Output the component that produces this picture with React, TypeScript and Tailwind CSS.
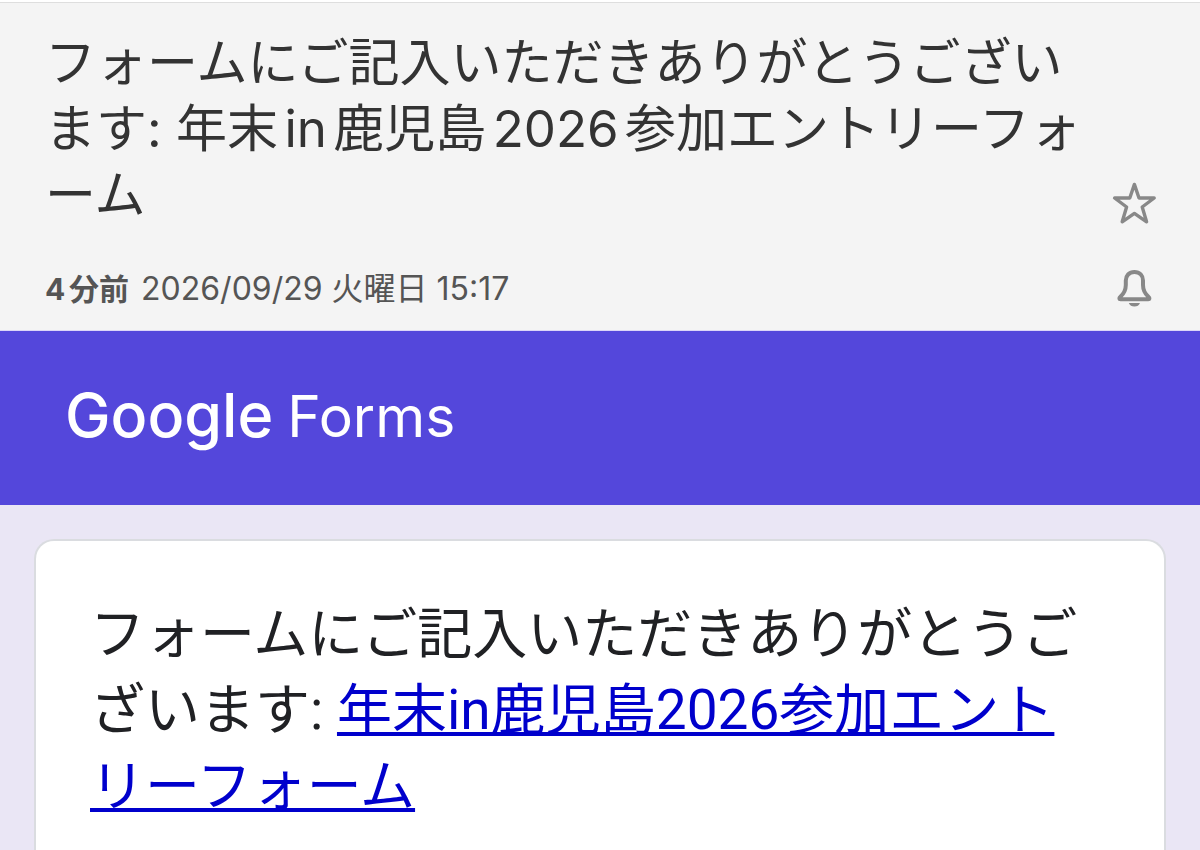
import React, { useState } from 'react'

const FORM_NAME_PREFIX = 'フォームにご記入いただきありがとうございます: '

function StarIcon({ filled }: { filled: boolean }) {
  return (
    <svg viewBox="0 0 44 44" className="size-[44px]" aria-hidden="true">
      <path
        d="M22.4 3.4 L27 17 L42.2 17 L30.2 26 L34.6 40.8 L22.4 32.4 L10.2 40.8 L14.6 26 L2.6 17 L17.8 17 Z"
        fill={filled ? 'currentColor' : 'none'}
        stroke="currentColor"
        strokeWidth="3.4"
        strokeLinejoin="round"
      />
    </svg>
  )
}

function BellIcon({ filled }: { filled: boolean }) {
  return (
    <svg viewBox="0 0 44 44" className="size-[44px]" aria-hidden="true">
      <path
        d="M22.4 5 C27.8 5 31 8.8 31 13.6 V18 C31 23.8 33.8 27.4 36.4 29.8 C38 31.3 37.6 32.2 36.2 32.2 H8.6 C7.2 32.2 6.8 31.3 8.4 29.8 C11 27.4 13.8 23.8 13.8 18 V13.6 C13.8 8.8 17 5 22.4 5 Z"
        fill={filled ? 'currentColor' : 'none'}
        stroke="currentColor"
        strokeWidth="4"
        strokeLinejoin="round"
      />
      <path d="M16.8 36 H28 C27 38.4 25.2 39.5 22.4 39.5 C19.6 39.5 17.8 38.4 16.8 36 Z" fill="currentColor" />
    </svg>
  )
}

export default function App() {
  const [starred, setStarred] = useState(false)
  const [notify, setNotify] = useState(false)

  return (
    <div lang="ja" className="flex min-h-screen flex-col bg-[#eae6f5]">
      <header className="border-t-2 border-b border-t-white border-b-[#dcd6f8] bg-[#f4f4f4] font-[Inter,'Noto_Sans_CJK_JP',sans-serif]">
        <div className="grid grid-cols-[1fr_44px] gap-x-4 gap-y-[39px] border-t border-[#dedede] pt-[27px] pr-[44px] pb-[19px] pl-[45px]">
          <h1 className="text-[51px] leading-[66px] text-[#333333] [line-break:anywhere] [text-autospace:normal]">
            {FORM_NAME_PREFIX + '年末in鹿児島2026参加エントリーフォーム'}
          </h1>
          <button
            type="button"
            aria-label="スター"
            aria-pressed={starred}
            className="self-end pb-[3px] text-[#888888]"
            onClick={() => setStarred(!starred)}
          >
            <StarIcon filled={starred} />
          </button>
          <p className="flex items-baseline gap-3 text-[32px] leading-[44px] text-[#555555]">
            <b className="text-[30px] font-bold [text-autospace:normal]">4分前</b>
            <time dateTime="2026-09-29T15:17">2026/09/29 火曜日 15:17</time>
          </p>
          <button
            type="button"
            aria-label="通知"
            aria-pressed={notify}
            className="text-[#888888]"
            onClick={() => setNotify(!notify)}
          >
            <BellIcon filled={notify} />
          </button>
        </div>
      </header>

      <main className="flex flex-1 flex-col font-[Roboto,'Noto_Sans_CJK_JP',sans-serif]">
        <div className="flex h-[174px] items-baseline gap-3.5 bg-[#5447db] px-[65px] pt-[44px] font-[Inter,sans-serif] text-white">
          <span className="text-[61px] leading-[80px] font-medium">Google</span>
          <span className="text-[57px] leading-[80px]">Forms</span>
        </div>

        <section className="mx-[34px] mt-[34px] flex-1 rounded-t-[20px] border-2 border-b-0 border-[#dadce0] bg-white pt-[55px] pr-[80px] pl-[54px]">
          <p className="text-[55px] leading-[76px] text-[#202124] [line-break:anywhere]">
            {FORM_NAME_PREFIX}
            <a
              href="#form"
              className="text-[#0000cc] underline decoration-4 underline-offset-3 [text-decoration-skip-ink:none]"
            >
              年末in鹿児島2026参加エントリーフォーム
            </a>
          </p>
        </section>
      </main>
    </div>
  )
}
